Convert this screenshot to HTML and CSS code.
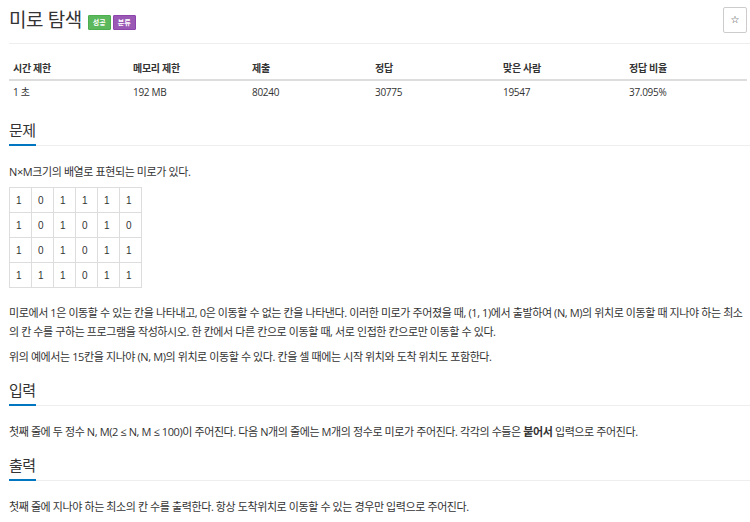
FILE: index.html
```html
<!DOCTYPE html>
<html lang="ko">
<head>
<meta charset="utf-8">
<title>미로 탐색</title>
<link rel="stylesheet" href="styles.css">
</head>
<body>
<div class="page">
  <div class="title-row">
    <h1 class="title"><span class="title-text">미로 탐색</span><span class="label label-green">성공</span><span class="label label-purple">분류</span></h1>
    <button class="star-btn" type="button">☆</button>
  </div>
  <hr class="rule">
  <table class="info">
    <colgroup><col class="c1"><col class="c2"><col class="c3"><col class="c4"><col class="c5"><col></colgroup>
    <thead>
      <tr><th>시간 제한</th><th>메모리 제한</th><th>제출</th><th>정답</th><th>맞은 사람</th><th>정답 비율</th></tr>
    </thead>
    <tbody>
      <tr><td>1 초</td><td>192 MB</td><td>80240</td><td>30775</td><td>19547</td><td>37.095%</td></tr>
    </tbody>
  </table>

  <section class="sec">
    <h2 class="sec-head"><span>문제</span></h2>
    <p class="txt">N×M크기의 배열로 표현되는 미로가 있다.</p>
    <table class="grid">
      <tr><td>1</td><td>0</td><td>1</td><td>1</td><td>1</td><td>1</td></tr>
      <tr><td>1</td><td>0</td><td>1</td><td>0</td><td>1</td><td>0</td></tr>
      <tr><td>1</td><td>0</td><td>1</td><td>0</td><td>1</td><td>1</td></tr>
      <tr><td>1</td><td>1</td><td>1</td><td>0</td><td>1</td><td>1</td></tr>
    </table>
    <p class="txt">미로에서 1은 이동할 수 있는 칸을 나타내고, 0은 이동할 수 없는 칸을 나타낸다. 이러한 미로가 주어졌을 때, (1, 1)에서 출발하여 (N, M)의 위치로 이동할 때 지나야 하는 최소의 칸 수를 구하는 프로그램을 작성하시오. 한 칸에서 다른 칸으로 이동할 때, 서로 인접한 칸으로만 이동할 수 있다.</p>
    <p class="txt">위의 예에서는 15칸을 지나야 (N, M)의 위치로 이동할 수 있다. 칸을 셀 때에는 시작 위치와 도착 위치도 포함한다.</p>
  </section>

  <section class="sec">
    <h2 class="sec-head"><span>입력</span></h2>
    <p class="txt">첫째 줄에 두 정수 N, M(2 ≤ N, M ≤ 100)이 주어진다. 다음 N개의 줄에는 M개의 정수로 미로가 주어진다. 각각의 수들은 <strong>붙어서</strong> 입력으로 주어진다.</p>
  </section>

  <section class="sec">
    <h2 class="sec-head"><span>출력</span></h2>
    <p class="txt">첫째 줄에 지나야 하는 최소의 칸 수를 출력한다. 항상 도착위치로 이동할 수 있는 경우만 입력으로 주어진다.</p>
  </section>
</div>
</body>
</html>
```
FILE: styles.css
```css
html, body {
  margin: 0;
  padding: 0;
  background: #fff;
}
body {
  font-family: "Open Sans", "Noto Sans CJK KR", sans-serif;
  color: #333;
}
.page {
  padding: 0 3px 0 9px;
}
.title-row {
  display: flex;
  align-items: center;
  justify-content: space-between;
  padding-top: 7px;
}
.title {
  margin: 0;
  font-weight: normal;
  font-size: 19px;
  line-height: 26px;
  letter-spacing: -0.4px;
  display: flex;
  align-items: center;
}
.title-text {
  margin-right: 6px;
}
.label {
  display: inline-block;
  font-size: 7px;
  letter-spacing: 0;
  font-weight: bold;
  color: #fff;
  line-height: 13px;
  height: 13px;
  padding: 0 4px;
  border-radius: 1px;
  margin-right: 2px;
  margin-top: 4px;
}
.label-green {
  background: #5cb85c;
  border: 1px solid #4cae4c;
}
.label-purple {
  background: #9b59b6;
  border: 1px solid #8e44ad;
}
.star-btn {
  width: 24px;
  height: 26px;
  border: 1px solid #ccc;
  border-radius: 2px;
  background: #fff;
  color: #333;
  font-size: 10px;
  padding: 0;
  font-family: "DejaVu Sans", sans-serif;
  line-height: 24px;
}
.rule {
  border: 0;
  border-top: 1px solid #eee;
  margin: 10px -3px 13px 0;
}
.info {
  width: 100%;
  border-collapse: collapse;
  table-layout: fixed;
  font-size: 10px;
  letter-spacing: -0.3px;
}
.info .c1 { width: 120px; }
.info .c2 { width: 119px; }
.info .c3 { width: 123px; }
.info .c4 { width: 128px; }
.info .c5 { width: 126px; }
.info th {
  text-align: left;
  font-weight: bold;
  padding: 5px 4px;
  line-height: 12px;
  border-bottom: 2px solid #ddd;
}
.info td {
  padding: 5px 4px;
  line-height: 12px;
}
.sec {
  margin-top: 17px;
}
.sec + .sec {
  margin-top: 14px;
}
.sec-head {
  margin: 0 0 16px;
  font-weight: normal;
  font-size: 15px;
  line-height: 20px;
  letter-spacing: -0.5px;
  border-bottom: 1px solid #eee;
  margin-right: -3px;
}
.sec-head span {
  display: inline-block;
  padding-bottom: 4px;
  border-bottom: 2px solid #0076c0;
  margin-bottom: -1px;
}
.txt {
  margin: 0 0 6px;
  font-size: 11px;
  line-height: 19px;
  letter-spacing: -0.4px;
}
.txt strong {
  font-weight: bold;
}
.grid {
  border-collapse: collapse;
  margin: 5px 0 15px;
  font-family: "Liberation Sans", sans-serif;
  font-size: 10px;
}
.grid td {
  width: 22px;
  height: 25px;
  padding: 0 0 0 6px;
  box-sizing: border-box;
  border: 1px solid #ddd;
  text-align: left;
}
```
